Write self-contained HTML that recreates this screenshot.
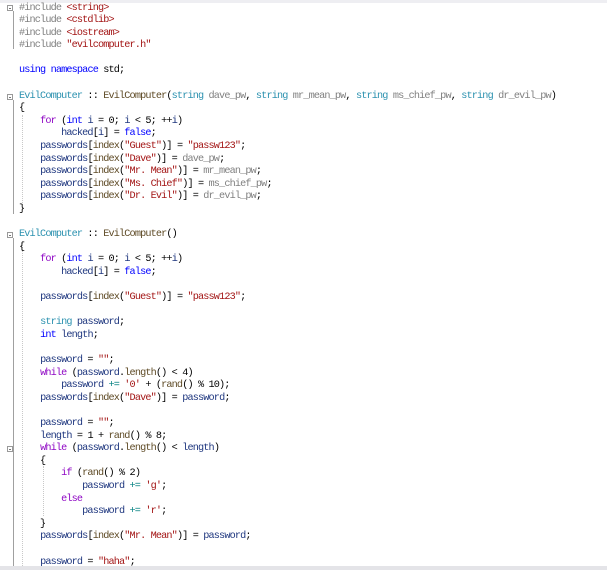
<!DOCTYPE html>
<html><head><meta charset="utf-8"><style>
html,body{margin:0;padding:0;background:#fff;width:607px;height:570px;overflow:hidden;position:relative}
.top{position:absolute;left:0;top:0;width:607px;height:3px;background:#eeeef2}
.bot{position:absolute;left:0;top:566px;width:607px;height:4px;background:#e4e4e8}
pre{position:absolute;left:19px;top:2.5px;margin:0;font-family:"Liberation Mono",monospace;font-size:10.2px;letter-spacing:-0.85px;line-height:12.6px;color:#000}
.pp{color:#808080}.s{color:#a31515}.k{color:#0000ff}.c{color:#8f08c4}.t{color:#2b91af}.v{color:#1f377f}.f{color:#5e4a25}.p{color:#808080}.o{color:#008080}
.vl{position:absolute;width:1px;background:#a0a0a0}
.dl{position:absolute;width:0;border-left:1px dotted #c8c8c8}
.fold{position:absolute;left:7px;width:6px;height:6px;border:1px solid #999;box-sizing:border-box;background:#fff}
.fold:after{content:"";position:absolute;left:1px;top:2px;width:2px;height:1px;background:#777}
</style></head><body>
<div class="top"></div><div class="bot"></div>
<div class="fold" style="top:5px"></div><div class="vl" style="left:13px;top:11px;height:38px"></div>
<div class="fold" style="top:94px"></div><div class="vl" style="left:13px;top:100px;height:114px"></div>
<div class="fold" style="top:232px"></div><div class="vl" style="left:13px;top:238px;height:328px"></div>
<div class="fold" style="top:446px"></div><div class="vl" style="left:13px;top:452px;height:66px"></div>
<div class="dl" style="left:22px;top:115px;height:90px"></div>
<div class="dl" style="left:22px;top:241px;height:325px"></div>
<div class="dl" style="left:43px;top:466px;height:50px"></div>
<pre><span class="pp">#include </span><span class="s">&lt;string&gt;</span>
<span class="pp">#include </span><span class="s">&lt;cstdlib&gt;</span>
<span class="pp">#include </span><span class="s">&lt;iostream&gt;</span>
<span class="pp">#include </span><span class="s">"evilcomputer.h"</span>

<span class="k">using</span> <span class="k">namespace</span> std;

<span class="t">EvilComputer</span> :: <span class="f">EvilComputer</span>(<span class="t">string</span> <span class="p">dave_pw</span>, <span class="t">string</span> <span class="p">mr_mean_pw</span>, <span class="t">string</span> <span class="p">ms_chief_pw</span>, <span class="t">string</span> <span class="p">dr_evil_pw</span>)
{
    <span class="c">for</span> (<span class="k">int</span> <span class="v">i</span> = 0; <span class="v">i</span> &lt; 5; ++<span class="v">i</span>)
        <span class="v">hacked</span>[<span class="v">i</span>] = <span class="k">false</span>;
    <span class="v">passwords</span>[<span class="f">index</span>(<span class="s">"Guest"</span>)] = <span class="s">"passw123"</span>;
    <span class="v">passwords</span>[<span class="f">index</span>(<span class="s">"Dave"</span>)] = <span class="p">dave_pw</span>;
    <span class="v">passwords</span>[<span class="f">index</span>(<span class="s">"Mr. Mean"</span>)] = <span class="p">mr_mean_pw</span>;
    <span class="v">passwords</span>[<span class="f">index</span>(<span class="s">"Ms. Chief"</span>)] = <span class="p">ms_chief_pw</span>;
    <span class="v">passwords</span>[<span class="f">index</span>(<span class="s">"Dr. Evil"</span>)] = <span class="p">dr_evil_pw</span>;
}

<span class="t">EvilComputer</span> :: <span class="f">EvilComputer</span>()
{
    <span class="c">for</span> (<span class="k">int</span> <span class="v">i</span> = 0; <span class="v">i</span> &lt; 5; ++<span class="v">i</span>)
        <span class="v">hacked</span>[<span class="v">i</span>] = <span class="k">false</span>;

    <span class="v">passwords</span>[<span class="f">index</span>(<span class="s">"Guest"</span>)] = <span class="s">"passw123"</span>;

    <span class="t">string</span> <span class="v">password</span>;
    <span class="k">int</span> <span class="v">length</span>;

    <span class="v">password</span> = <span class="s">""</span>;
    <span class="c">while</span> (<span class="v">password</span>.<span class="f">length</span>() &lt; 4)
        <span class="v">password</span> <span class="o">+=</span> <span class="s">'0'</span> + (<span class="f">rand</span>() % 10);
    <span class="v">passwords</span>[<span class="f">index</span>(<span class="s">"Dave"</span>)] = <span class="v">password</span>;

    <span class="v">password</span> = <span class="s">""</span>;
    <span class="v">length</span> = 1 + <span class="f">rand</span>() % 8;
    <span class="c">while</span> (<span class="v">password</span>.<span class="f">length</span>() &lt; <span class="v">length</span>)
    {
        <span class="c">if</span> (<span class="f">rand</span>() % 2)
            <span class="v">password</span> <span class="o">+=</span> <span class="s">'g'</span>;
        <span class="c">else</span>
            <span class="v">password</span> <span class="o">+=</span> <span class="s">'r'</span>;
    }
    <span class="v">passwords</span>[<span class="f">index</span>(<span class="s">"Mr. Mean"</span>)] = <span class="v">password</span>;

    <span class="v">password</span> = <span class="s">"haha"</span>;</pre>
</body></html>
